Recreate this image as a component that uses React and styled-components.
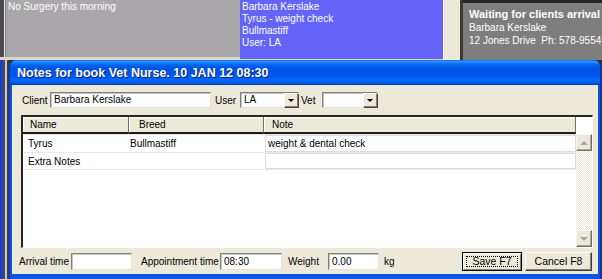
import React from "react";
import styled, { createGlobalStyle } from "styled-components";

const GlobalStyle = createGlobalStyle`
  html, body {
    margin: 0;
    padding: 0;
    background: #303030;
  }
  body {
    font-family: "Liberation Sans", Arial, sans-serif;
    font-size: 10px;
  }
  * {
    box-sizing: border-box;
  }
`;

const pets = [
  { name: "Tyrus", breed: "Bullmastiff", note: "weight & dental check" },
  { name: "Extra Notes", breed: "", note: "" },
];

const App = () => {
  return (
    <>
      <GlobalStyle />
      <Screen>
        <Backdrop>
          <EdgeStrip />
          <DayPanel>No Surgery this morning</DayPanel>
          <BookingPanel>
            <div>Barbara Kerslake</div>
            <div>Tyrus - weight check</div>
            <div>Bullmastiff</div>
            <div>User: LA</div>
          </BookingPanel>
          <Splitter />
          <StatusPanel>
            <StatusTitle>Waiting for clients arrival</StatusTitle>
            <div>Barbara Kerslake</div>
            <div>12 Jones Drive&nbsp; Ph: 578-9554</div>
          </StatusPanel>
        </Backdrop>

        <Lower>
          <DesktopEdge />
          <Window>
            <TitleBar>Notes for book Vet Nurse. 10 JAN 12 08:30</TitleBar>
            <WindowBody>
              <FieldRow $top={7} $left={10}>
                <Label $w={28}>Client</Label>
                <TextBox $w={161}>Barbara Kerslake</TextBox>
                <Label $w={25} $ml={4}>User</Label>
                <Combo $w={59}>
                  <ComboText>LA</ComboText>
                  <DropButton><DownArrow /></DropButton>
                </Combo>
                <Label $w={21} $ml={2}>Vet</Label>
                <Combo $w={56}>
                  <ComboText />
                  <DropButton><DownArrow /></DropButton>
                </Combo>
              </FieldRow>

              <Grid>
                <HeaderRow>
                  <HeaderCell $w={106} $pl={7}>Name</HeaderCell>
                  <HeaderCell $w={135} $pl={10}>Breed</HeaderCell>
                  <HeaderCell $w={312} $pl={8}>Note</HeaderCell>
                  <HeaderCorner />
                </HeaderRow>
                <GridBody>
                  <RowList>
                    {pets.map(pet => (
                      <PetRow key={pet.name}>
                        <NameCell>{pet.name}</NameCell>
                        <BreedCell>{pet.breed}</BreedCell>
                        <NoteCell>{pet.note}</NoteCell>
                      </PetRow>
                    ))}
                  </RowList>
                  <ScrollBar>
                    <ScrollButton><UpArrow /></ScrollButton>
                    <ScrollTrack />
                    <ScrollButton><DownArrowGrey /></ScrollButton>
                  </ScrollBar>
                </GridBody>
              </Grid>

              <Footer>
                <Label $w={52}>Arrival time</Label>
                <TextBox $w={61} $h={17} />
                <Label $w={79} $ml={9}>Appointment time</Label>
                <TextBox $w={62} $h={17}>08:30</TextBox>
                <Label $w={40} $ml={6}>Weight</Label>
                <TextBox $w={51} $h={17}>0.00</TextBox>
                <Label $ml={5}>kg</Label>
                <Spacer />
                <DefaultButton>
                  <FocusRing>Save F7</FocusRing>
                </DefaultButton>
                <PushButton>Cancel F8</PushButton>
              </Footer>
            </WindowBody>
          </Window>
        </Lower>
      </Screen>
    </>
  );
};

export default App;

const Screen = styled.div`
  width: 602px;
  height: 279px;
  overflow: hidden;
  display: flex;
  flex-direction: column;
  background: #303030;
`;

const Backdrop = styled.div`
  display: flex;
  align-items: flex-start;
  height: 60px;
  flex-shrink: 0;
  background: #d9d6d0;
`;

const EdgeStrip = styled.div`
  width: 6px;
  height: 57px;
  background: linear-gradient(to right, #4c4c4c 0 4px, #f2f2f2 4px 5px, #777 5px);
`;

const DayPanel = styled.div`
  width: 234px;
  height: 57px;
  padding: 1px 2px;
  line-height: 12px;
  background: #a9a7a9;
  color: #fff;
`;

const BookingPanel = styled.div`
  width: 203px;
  height: 59px;
  padding: 1px 2px;
  line-height: 12px;
  background: #6464fb;
  color: #fff;
`;

const Splitter = styled.div`
  width: 20px;
  height: 60px;
  background: #ece9d8;
  border-left: 1px solid #fbfaf5;
  border-right: 3px solid #3a3a3a;
`;

const StatusPanel = styled.div`
  flex: 1;
  height: 60px;
  padding: 5px 0 0 6px;
  border-top: 3px solid #262626;
  background: #7e7e7e;
  color: #fff;
  line-height: 13px;
  white-space: nowrap;
  overflow: hidden;
`;

const StatusTitle = styled.div`
  font-weight: bold;
  font-size: 11px;
`;

const Lower = styled.div`
  display: flex;
  flex: 1;
`;

const DesktopEdge = styled.div`
  width: 9px;
  background: linear-gradient(
    to right,
    #1d3fc6 0 3px,
    #4a4a4a 3px 5px,
    #c9c9c9 5px 7px,
    #3c3c3c 7px
  );
`;

const Window = styled.div`
  width: 592px;
  height: 219px;
  display: flex;
  flex-direction: column;
  background: #0a55e2;
  border-radius: 7px 7px 0 0;
  border-left: 1px solid #0831d9;
  border-right: 1px solid #0831d9;
`;

const TitleBar = styled.div`
  height: 25px;
  flex-shrink: 0;
  padding: 0 0 0 7px;
  border-radius: 7px 7px 0 0;
  background: linear-gradient(
    #0058ee 0%,
    #3593ff 4%,
    #288eff 8%,
    #127dff 12%,
    #036ffc 16%,
    #0262ee 22%,
    #0057e5 30%,
    #0054e3 40%,
    #0055eb 60%,
    #005bf5 70%,
    #026afe 80%,
    #0062ef 88%,
    #0052d6 94%,
    #003ea6 100%
  );
  color: #fff;
  font-weight: bold;
  font-size: 12.5px;
  line-height: 26px;
  text-shadow: 1px 1px #0a1f78;
  white-space: nowrap;
`;

const WindowBody = styled.div`
  height: 189px;
  margin: 0 2px;
  background: #ece9d8;
  display: flex;
  flex-direction: column;
`;

const FieldRow = styled.div`
  display: flex;
  align-items: center;
  height: 16px;
  margin-top: ${props => props.$top}px;
  padding-left: ${props => props.$left}px;
`;

const Label = styled.span`
  flex-shrink: 0;
  width: ${props => (props.$w ? `${props.$w}px` : "auto")};
  margin-left: ${props => props.$ml || 0}px;
  color: #000;
  white-space: nowrap;
`;

const TextBox = styled.div`
  flex-shrink: 0;
  width: ${props => props.$w}px;
  height: ${props => props.$h || 16}px;
  padding-left: 3px;
  line-height: ${props => (props.$h || 16) - 2}px;
  background: #fff;
  border: 1px solid;
  border-color: #808080 #e4e2d8 #e4e2d8 #808080;
  box-shadow: inset 1px 1px #c8c6bc;
  color: #000;
  white-space: nowrap;
`;

const Combo = styled.div`
  flex-shrink: 0;
  display: flex;
  width: ${props => props.$w}px;
  height: 16px;
  background: #fff;
  border: 1px solid;
  border-color: #808080 #e4e2d8 #e4e2d8 #808080;
  box-shadow: inset 1px 1px #c8c6bc;
`;

const ComboText = styled.div`
  flex: 1;
  padding-left: 3px;
  line-height: 14px;
  color: #000;
`;

const DropButton = styled.div`
  width: 14px;
  height: 14px;
  display: flex;
  align-items: center;
  justify-content: center;
  background: #ece9d8;
  border: 1px solid;
  border-color: #fff #808080 #808080 #fff;
  box-shadow: 1px 1px #404040;
`;

const DownArrow = styled.span`
  width: 0;
  height: 0;
  border-left: 3px solid transparent;
  border-right: 3px solid transparent;
  border-top: 3px solid #000;
  margin-top: 1px;
`;

const Grid = styled.div`
  display: flex;
  flex-direction: column;
  width: 572px;
  height: 133px;
  margin: 7px 0 0 9px;
  background: #fff;
  border-top: 2px solid #262626;
  border-left: 2px solid #262626;
  border-right: 1px solid #fbfaf5;
  border-bottom: 1px solid #fbfaf5;
`;

const HeaderRow = styled.div`
  display: flex;
  height: 17px;
  flex-shrink: 0;
`;

const HeaderCell = styled.div`
  width: ${props => props.$w}px;
  padding-left: ${props => props.$pl}px;
  background: #ece9d8;
  border-right: 1px solid #6e6e6e;
  border-bottom: 2px solid #1c1c1c;
  box-shadow: inset 1px 1px #fff;
  line-height: 15px;
  color: #000;
`;

const HeaderCorner = styled.div`
  flex: 1;
  background: #fff;
`;

const GridBody = styled.div`
  display: flex;
  flex: 1;
`;

const RowList = styled.div`
  width: 553px;
`;

const PetRow = styled.div`
  display: flex;
  height: 18px;
  border-top: 1px solid #e8e8e8;
  &:last-child {
    border-bottom: 1px solid #e8e8e8;
  }
`;

const NameCell = styled.div`
  width: 106px;
  padding-left: 5px;
  line-height: 17px;
  color: #000;
`;

const BreedCell = styled.div`
  width: 136px;
  padding-left: 1px;
  line-height: 17px;
  color: #000;
`;

const NoteCell = styled.div`
  flex: 1;
  padding-left: 2px;
  border: 1px solid #dcdcdc;
  line-height: 15px;
  color: #000;
`;

const ScrollBar = styled.div`
  flex: 1;
  display: flex;
  flex-direction: column;
`;

const ScrollButton = styled.div`
  height: 17px;
  flex-shrink: 0;
  display: flex;
  align-items: center;
  justify-content: center;
  background: #ece9d8;
  border: 1px solid;
  border-color: #f7f6f0 #6e6e6e #6e6e6e #f7f6f0;
  box-shadow: inset -1px -1px #a8a69c;
`;

const UpArrow = styled.span`
  width: 0;
  height: 0;
  border-left: 4px solid transparent;
  border-right: 4px solid transparent;
  border-bottom: 4px solid #a8a69c;
`;

const DownArrowGrey = styled.span`
  width: 0;
  height: 0;
  border-left: 4px solid transparent;
  border-right: 4px solid transparent;
  border-top: 4px solid #a8a69c;
`;

const ScrollTrack = styled.div`
  flex: 1;
  background: repeating-conic-gradient(#ffffff 0 25%, #ece9d8 0 50%) 0 0 / 2px 2px;
`;

const Footer = styled.div`
  display: flex;
  align-items: center;
  height: 19px;
  margin-top: 4px;
  padding: 0 6px 0 7px;
`;

const Spacer = styled.div`
  flex: 1;
`;

const DefaultButton = styled.div`
  display: flex;
  width: 60px;
  height: 19px;
  background: #ece9d8;
  border: 1px solid #000;
  box-shadow: inset 1px 1px #fff, inset -1px -1px #808080;
`;

const FocusRing = styled.div`
  flex: 1;
  margin: 3px;
  border: 1px dotted #000;
  text-align: center;
  line-height: 9px;
  font-size: 10.5px;
  color: #000;
`;

const PushButton = styled.div`
  width: 67px;
  height: 19px;
  margin-left: 3px;
  background: #ece9d8;
  border: 1px solid;
  border-color: #fff #404040 #404040 #fff;
  box-shadow: inset -1px -1px #808080;
  text-align: center;
  line-height: 17px;
  font-size: 10.5px;
  color: #000;
`;
